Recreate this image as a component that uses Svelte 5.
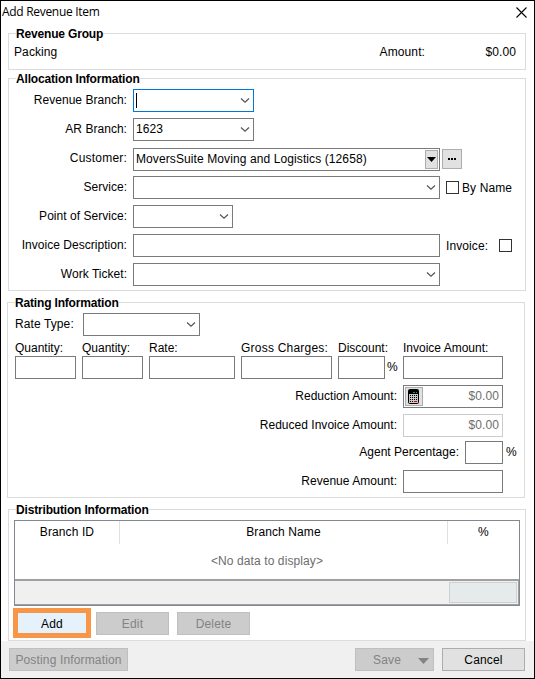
<script>
    let revenueBranch = $state('');
    let arBranch = $state('1623');
    let byName = $state(false);
    let invoice = $state(false);

    const customer = 'MoversSuite Moving and Logistics (12658)';

    const rates = [
        { label: 'Quantity:', size: 'w61' },
        { label: 'Quantity:', size: 'w61' },
        { label: 'Rate:', size: 'w86' },
        { label: 'Gross Charges:', size: 'w91', wide: true },
        { label: 'Discount:', size: 'w47', suffix: '%' },
        { label: 'Invoice Amount:', size: 'w100' }
    ];
</script>

{#snippet chevron()}
    <svg class="chevron" width="10" height="7" viewBox="0 0 10 7">
        <path d="M1 1.5 L5 5.2 L9 1.5" fill="none" stroke="#555" stroke-width="1.2" />
    </svg>
{/snippet}

<div class="dialog">
    <header>
        <span class="title">Add Revenue Item</span>
        <svg class="close" width="11" height="11" viewBox="0 0 11 11">
            <path d="M0.5 0.5 L10.5 10.5 M10.5 0.5 L0.5 10.5" stroke="#000" stroke-width="1.1" />
        </svg>
    </header>

    <section class="group revenue">
        <h2>Revenue Group</h2>
        <span>Packing</span>
        <span class="amountlabel">Amount:</span>
        <span class="amount">$0.00</span>
    </section>

    <section class="group allocation">
        <h2>Allocation Information</h2>
        <div class="row">
            <span class="label">Revenue Branch:</span>
            <div class="box focused w121"><i class="caret"></i>{revenueBranch}{@render chevron()}</div>
        </div>
        <div class="row">
            <span class="label">AR Branch:</span>
            <div class="box w121">{arBranch}{@render chevron()}</div>
        </div>
        <div class="row customer">
            <span class="label">Customer:</span>
            <div class="box w307">
                <span class="customername">{customer}</span>
                <button class="drop" aria-label="Open list">
                    <svg width="9" height="5" viewBox="0 0 9 5"><path d="M0 0 H9 L4.5 5 Z" /></svg>
                </button>
            </div>
            <button class="more" aria-label="Find customer"><i></i><i></i><i></i></button>
        </div>
        <div class="row">
            <span class="label">Service:</span>
            <div class="box w307">{@render chevron()}</div>
            <label class="byname"><input type="checkbox" bind:checked={byName} /><span>By Name</span></label>
        </div>
        <div class="row">
            <span class="label">Point of Service:</span>
            <div class="box w100">{@render chevron()}</div>
        </div>
        <div class="row">
            <span class="label">Invoice Description:</span>
            <div class="box w307"></div>
            <label class="invoice"><span>Invoice:</span><input type="checkbox" bind:checked={invoice} /></label>
        </div>
        <div class="row">
            <span class="label">Work Ticket:</span>
            <div class="box w307">{@render chevron()}</div>
        </div>
    </section>

    <section class="group rating">
        <h2>Rating Information</h2>
        <div class="ratetype">
            <span>Rate Type:</span>
            <div class="box w117">{@render chevron()}</div>
        </div>
        <div class="rates">
            {#each rates as rate}
                <div class="rate">
                    <span class="ratelabel {rate.size}" class:wide={rate.wide}>{rate.label}</span>
                    <div class="ratebox">
                        <div class="box {rate.size}"></div>
                        {#if rate.suffix}<span class="suffix">{rate.suffix}</span>{/if}
                    </div>
                </div>
            {/each}
        </div>
        <div class="totals">
            <div class="total">
                <span>Reduction Amount:</span>
                <div class="box money w100">
                    <button class="calc" aria-label="Calculate">
                        <svg width="11" height="15" viewBox="0 0 11 15">
                            <rect x="0.5" y="0.5" width="10" height="14" rx="1" fill="#c8c8c8" stroke="#000" />
                            <rect x="1" y="1" width="9" height="4" fill="#000" />
                            <path d="M5 3.5 H7 M8 3.5 H9" stroke="#00a0a0" />
                            <path d="M2 6.5 H9 M2 8.5 H9 M2 10.5 H9 M2 12.5 H5" stroke="#000" stroke-dasharray="1 1" />
                            <path d="M6 12.5 H9" stroke="#e00000" />
                        </svg>
                    </button>
                    $0.00
                </div>
            </div>
            <div class="total">
                <span>Reduced Invoice Amount:</span>
                <div class="box money disabled w100">$0.00</div>
            </div>
            <div class="total agent">
                <span>Agent Percentage:</span>
                <div class="box w38"></div>
                <span class="after">%</span>
            </div>
            <div class="total last">
                <span>Revenue Amount:</span>
                <div class="box w100"></div>
            </div>
        </div>
    </section>

    <section class="group distribution">
        <h2>Distribution Information</h2>
        <div class="grid">
            <div class="gridhead">
                <span>Branch ID</span>
                <span>Branch Name</span>
                <span>%</span>
            </div>
            <div class="empty">&lt;No data to display&gt;</div>
            <div class="gridfoot"><div class="sum"></div></div>
        </div>
        <div class="actions">
            <button class="add">Add</button>
            <button class="btn" disabled>Edit</button>
            <button class="btn" disabled>Delete</button>
        </div>
    </section>

    <footer>
        <button class="btn posting" disabled>Posting Information</button>
        <button class="btn save" disabled>
            Save
            <svg width="11" height="6" viewBox="0 0 11 6"><path d="M0 0 H11 L5.5 6 Z" fill="#838383" /></svg>
        </button>
        <button class="btn cancel">Cancel</button>
    </footer>
</div>

<style>
    :global(body) {
        background: #fff;
    }

    .dialog, .dialog * {
        box-sizing: border-box;
    }

    .dialog {
        display: flex;
        flex-direction: column;
        width: 535px;
        height: 679px;
        border: 1px solid #000;
        background: #fff;
        color: #000;
        font: 12px/15px 'Liberation Sans', Arial, sans-serif;
        letter-spacing: 0.1px;
        white-space: nowrap;
    }

    header {
        display: flex;
        justify-content: space-between;
        height: 32px;
        padding: 3px 7px 0 1px;
        font: 12px/16px 'Open Sans', sans-serif;
        letter-spacing: -0.3px;
    }

    .close {
        margin-top: 3px;
    }

    .group {
        position: relative;
        width: 518px;
        margin-left: 7px;
        border: 1px solid #dcdcdc;
    }

    h2 {
        position: absolute;
        top: -7px;
        left: 7px;
        margin: 0;
        background: #fff;
        font-size: 12px;
        line-height: 15px;
        font-weight: bold;
        letter-spacing: -0.17px;
    }

    .revenue {
        display: flex;
        height: 37px;
        padding: 11px 9px 0 5px;
    }

    .amountlabel {
        margin-left: auto;
    }

    .amount {
        width: 91px;
        text-align: right;
    }

    .allocation {
        display: flex;
        flex-direction: column;
        gap: 6px;
        height: 213px;
        margin-top: 8px;
        padding-top: 10px;
    }

    .row {
        display: flex;
        align-items: center;
        height: 23px;
    }

    .label {
        width: 118px;
        margin-right: 6px;
        text-align: right;
        letter-spacing: 0.03px;
    }

    .customer {
        margin: 1px 0 -1px;
    }

    .customer .label {
        margin-top: -2px;
        letter-spacing: 0.2px;
    }

    .box {
        display: flex;
        align-items: center;
        height: 23px;
        padding: 0 3px 0 2px;
        border: 1px solid #7a7a7a;
        background: #fff;
    }

    .focused {
        border-color: #0078d7;
    }

    .caret {
        width: 1px;
        height: 15px;
        background: #000;
    }

    .chevron {
        margin-left: auto;
    }

    .w38 { width: 38px; }
    .w47 { width: 47px; }
    .w61 { width: 61px; }
    .w86 { width: 86px; }
    .w91 { width: 91px; }
    .w100 { width: 100px; }
    .w117 { width: 117px; }
    .w121 { width: 121px; }
    .w307 { width: 307px; }

    button {
        padding: 0;
        border: 1px solid #adadad;
        background: #e1e1e1;
        color: #000;
        font: inherit;
        letter-spacing: 0.15px;
    }

    .drop {
        display: flex;
        align-items: center;
        justify-content: center;
        width: 13px;
        height: 19px;
        margin: 0 -2px 0 auto;
    }

    .more {
        display: flex;
        align-items: center;
        justify-content: center;
        gap: 1px;
        width: 20px;
        height: 20px;
        margin: -1px 0 0 2px;
    }

    .more i {
        width: 2px;
        height: 2px;
        background: #000;
    }

    .row label {
        display: flex;
        align-items: center;
        margin-left: 6px;
    }

    .row label span {
        margin-top: 2px;
    }

    input {
        appearance: none;
        width: 13px;
        height: 13px;
        margin: 0;
        border: 1px solid #333;
        background: #fff;
    }

    .byname input {
        margin-right: 3px;
    }

    .invoice span {
        width: 53px;
    }

    .rating {
        height: 196px;
        margin: 11px 0 0 6px;
        padding: 10px 0 0 7px;
    }

    .ratetype {
        display: flex;
        align-items: center;
        gap: 8px;
    }

    .ratetype span {
        width: 60px;
        margin-top: -1px;
    }

    .rates {
        display: flex;
        gap: 6px;
        margin-top: 5px;
    }

    .ratelabel {
        display: block;
        letter-spacing: 0;
    }

    .wide {
        letter-spacing: 0.22px;
    }

    .ratebox {
        display: flex;
        align-items: center;
    }

    .suffix {
        width: 12px;
        padding-left: 2px;
    }

    .totals {
        display: flex;
        flex-direction: column;
        gap: 6px;
        width: 488px;
        margin-top: 6px;
    }

    .total {
        position: relative;
        display: flex;
        align-items: center;
        justify-content: flex-end;
        gap: 6px;
        height: 23px;
        letter-spacing: 0.02px;
    }

    .agent {
        margin-top: -2px;
    }

    .total .after {
        position: absolute;
        left: 491px;
    }

    .last > span {
        margin-top: -1px;
    }

    .money {
        justify-content: flex-end;
        padding: 0 3px 0 1px;
        color: #6d6d6d;
        letter-spacing: 0.1px;
    }

    .disabled {
        border-color: #ccc;
    }

    .calc {
        display: flex;
        align-items: center;
        width: 18px;
        height: 19px;
        margin-right: auto;
        padding-left: 2px;
    }

    .distribution {
        height: 132px;
        margin-top: 11px;
        padding: 10px 0 0 5px;
    }

    .grid {
        width: 506px;
        height: 86px;
        border: 1px solid #828790;
    }

    .gridhead {
        display: grid;
        grid-template-columns: 104px 328px 1fr;
        height: 21px;
        line-height: 23px;
        text-align: center;
    }

    .gridhead span + span {
        border-left: 1px solid #e0e0e0;
    }

    .empty {
        height: 37px;
        line-height: 39px;
        text-align: center;
        color: #6d6d6d;
    }

    .gridfoot {
        height: 26px;
        padding: 1px 1px 0 0;
        border: 1px solid #a0a0a0;
        border-width: 2px 1px 1px 0;
        background: #f0f0f0;
    }

    .sum {
        width: 68px;
        height: 21px;
        margin-left: auto;
        border: 1px solid #d0d0d0;
        background: #e5eaeb;
    }

    .actions {
        display: flex;
        align-items: center;
        height: 30px;
        margin: 2px 0 0 -1px;
    }

    .add {
        width: 78px;
        height: 30px;
        margin-right: 5px;
        padding-top: 2px;
        border: 5px solid #f79646;
        background: #e5f1fb;
    }

    .btn {
        width: 73px;
        height: 23px;
        margin-right: 8px;
        padding-top: 2px;
    }

    .btn:disabled {
        border-color: #bfbfbf;
        background: #ccc;
        color: #838383;
    }

    .actions .btn {
        margin-top: 1px;
    }

    footer {
        display: flex;
        height: 37px;
        padding: 7px 1px 0 8px;
        background: #f0f0f0;
    }

    .posting {
        width: 119px;
    }

    .save {
        display: flex;
        align-items: center;
        justify-content: space-between;
        width: 79px;
        margin-left: auto;
        padding: 2px 4px 0 17px;
    }

    .cancel {
        width: 83px;
    }
</style>
